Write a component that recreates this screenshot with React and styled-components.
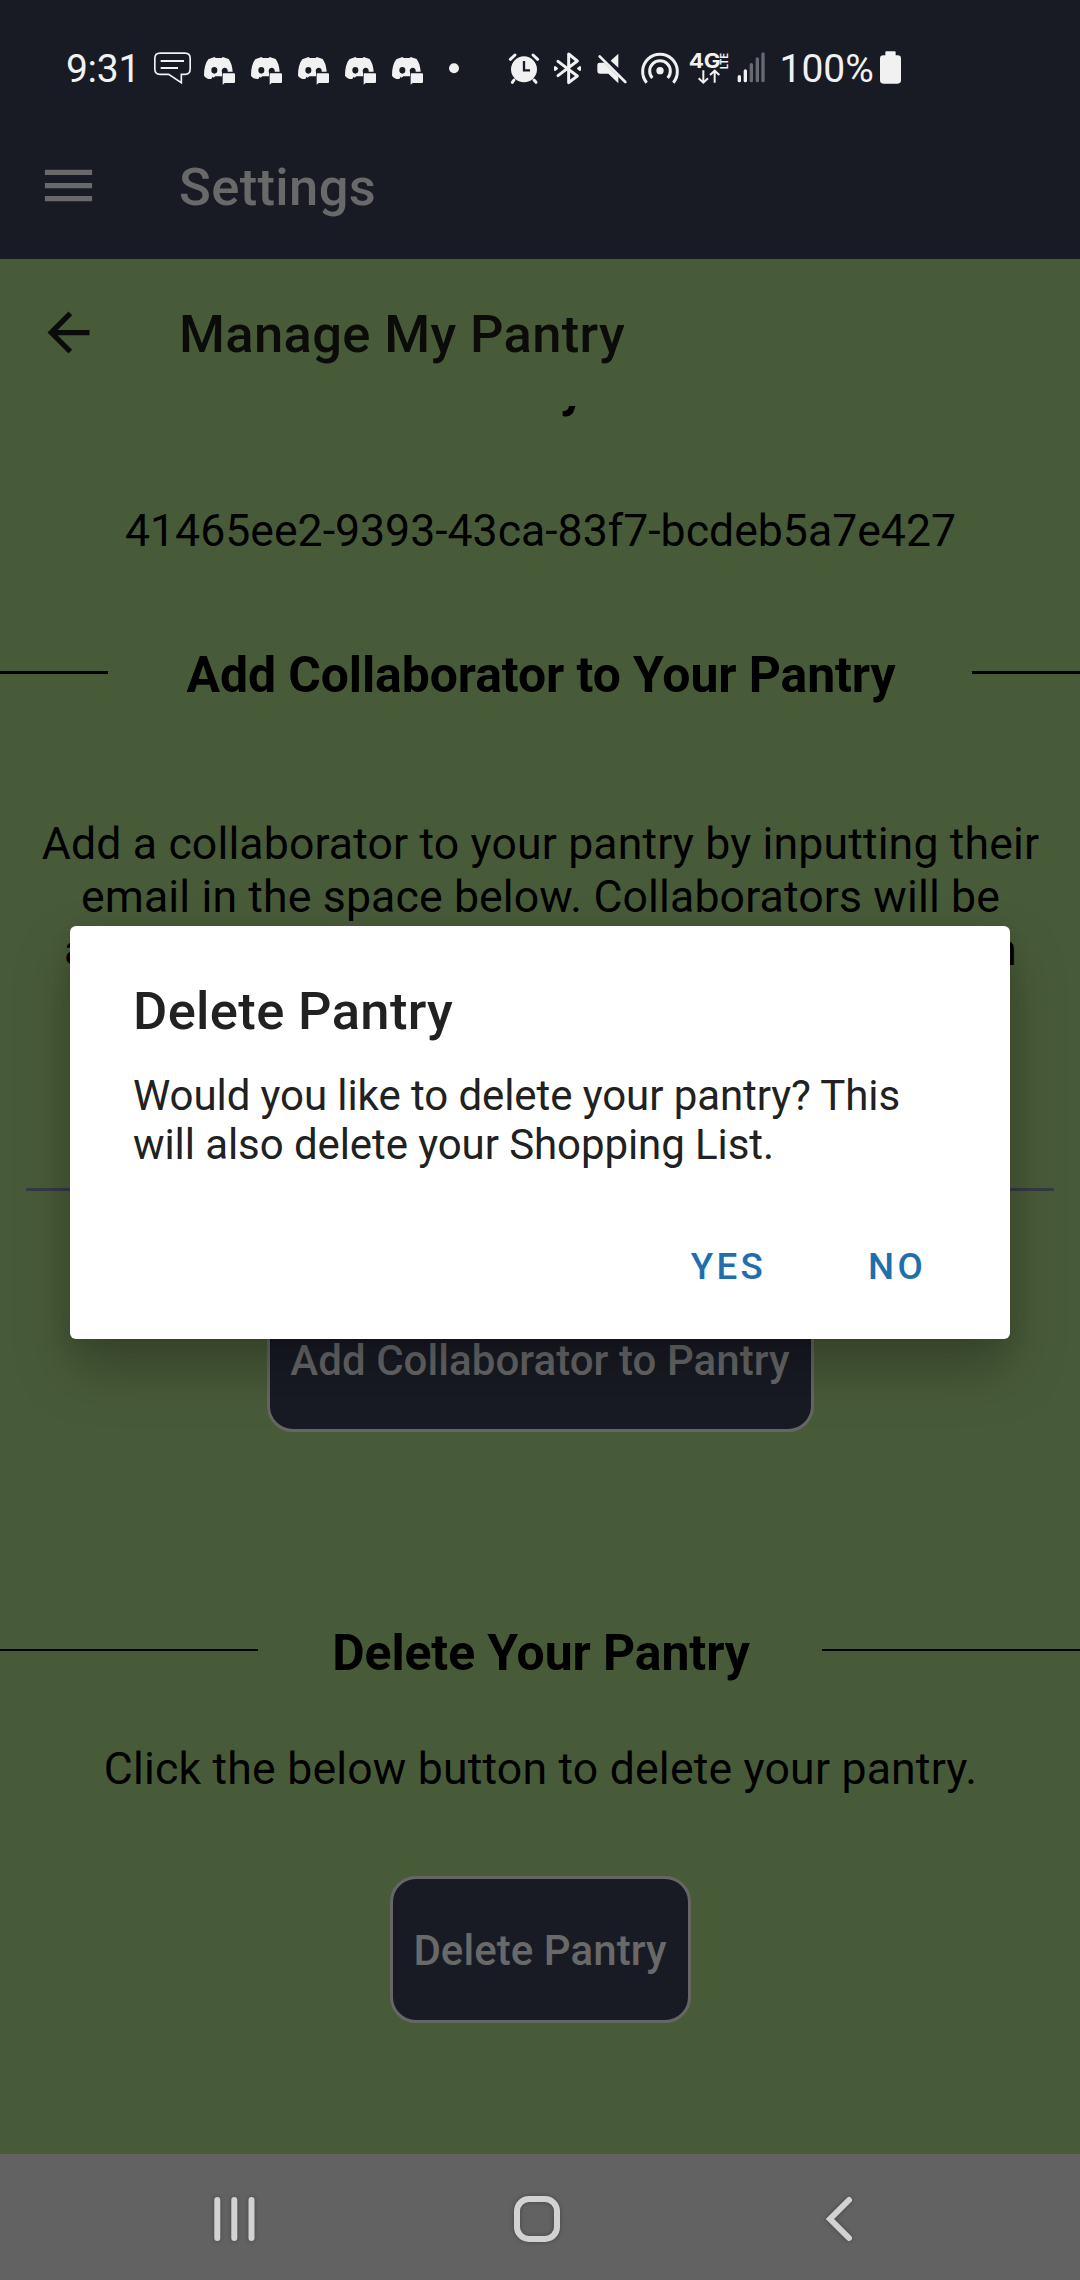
import React from "react";
import styled, { createGlobalStyle } from "styled-components";

const Global = createGlobalStyle`
  * { box-sizing: border-box; }
  body { margin: 0; background: #485b39; font-family: Roboto, sans-serif; }
`;

const Screen = styled.div`
  position: relative;
  width: 1080px;
  height: 2280px;
  display: flex;
  flex-direction: column;
  overflow: hidden;
  background: #485b39;
`;

const StatusBar = styled.div`
  height: 112px;
  flex: none;
  display: flex;
  align-items: center;
  padding: 24px 178px 0 66px;
  background: #191b24;
  color: #f1f1f1;
`;

const StatusText = styled.span`
  font-size: 39px;
  line-height: 46px;
  margin-top: 2px;
  width: ${(p) => p.$w}px;
  letter-spacing: ${(p) => p.$spacing}px;
  white-space: nowrap;
`;

const Glyph = styled.svg`
  display: block;
  flex: none;
  height: 36px;
  overflow: visible;
  margin-left: ${(p) => p.$gap || 0}px;
`;

const AppBar = styled.div`
  height: 147px;
  flex: none;
  display: flex;
  align-items: center;
  padding-left: 37px;
  gap: 79px;
  background: ${(p) => p.$bg};
  color: ${(p) => p.$fg};
`;

const BarIcon = styled.svg`
  width: 63px;
  height: 63px;
  display: block;
  fill: currentColor;
`;

const BarTitle = styled.h1`
  margin: 3px 0 0;
  font-size: 52.5px;
  line-height: 62px;
  font-weight: 500;
  letter-spacing: 0.36px;
`;

const Content = styled.main`
  flex: 1;
  min-height: 0;
  display: flex;
  flex-direction: column;
  align-items: center;
  overflow: hidden;
  color: #000;
`;

const Heading = styled.h2`
  margin: 0;
  padding-left: 2px;
  font-size: 49.9px;
  line-height: 60px;
  font-weight: 700;
  letter-spacing: -0.08px;
  text-align: center;
  white-space: nowrap;
`;

const ScrolledHeading = styled(Heading)`
  margin-top: -47px;
  flex: none;
`;

const SectionRow = styled.div`
  width: 100%;
  flex: none;
  display: flex;
  justify-content: space-between;
  margin-top: ${(p) => p.$top}px;
`;

const Rule = styled.div`
  width: ${(p) => p.$w}px;
  height: ${(p) => p.$h}px;
  margin-top: 26px;
  background: #000;
`;

const Paragraph = styled.p`
  margin: ${(p) => p.$top}px 0 0;
  padding-left: 1px;
  flex: none;
  font-size: 44.6px;
  line-height: 53px;
  letter-spacing: ${(p) => p.$spacing || 0}px;
  text-align: center;
  white-space: nowrap;
`;

const WideLine = styled.span`
  display: flex;
  justify-content: space-between;
  width: 953px;
  margin: 0 auto;
`;

const FieldLine = styled.div`
  flex: none;
  width: 1028px;
  height: 3px;
  margin-top: 211px;
  background: #363a42;
`;

const ActionButton = styled.button`
  flex: none;
  width: ${(p) => p.$w}px;
  height: 147px;
  margin-top: ${(p) => p.$top}px;
  padding: ${(p) => p.$drop || 2}px 0 0;
  border: 3px solid #666;
  border-radius: 26px;
  background: #191b24;
  color: #696969;
  font: 500 42px/50px Roboto, sans-serif;
  letter-spacing: 0.06px;
  white-space: nowrap;
`;

const NavBar = styled.nav`
  height: 126px;
  flex: none;
  display: flex;
  align-items: center;
  padding: 3px 222px 0 208px;
  background: #626262;
`;

const NavIcon = styled.svg`
  width: ${(p) => p.$w}px;
  height: 54px;
  margin-right: ${(p) => p.$after || 0}px;
  display: block;
  fill: none;
  stroke: #d2d2d2;
  stroke-width: 6;
  stroke-linecap: round;
  filter: drop-shadow(0 0 2px rgba(0, 0, 0, 0.3));
`;

const Overlay = styled.div`
  position: absolute;
  inset: 0;
  display: flex;
  align-items: flex-start;
  justify-content: center;
  padding-top: 926px;
`;

const Dialog = styled.section`
  width: 940px;
  height: 413px;
  display: flex;
  flex-direction: column;
  padding: 54px 63px 0;
  border-radius: 6px;
  background: #fff;
  color: #212121;
  box-shadow: 0 30px 56px rgba(0, 0, 0, 0.26), 0 4px 20px rgba(0, 0, 0, 0.08);
`;

const DialogTitle = styled.h2`
  margin: 0;
  font-size: 52.5px;
  line-height: 62px;
  font-weight: 500;
  letter-spacing: 0.36px;
`;

const DialogText = styled.p`
  margin: 29px 0 0;
  font-size: 42px;
  line-height: 49px;
  letter-spacing: -0.08px;
`;

const DialogActions = styled.div`
  display: flex;
  justify-content: flex-end;
  gap: 102px;
  margin-top: 76px;
  padding-right: 21px;
`;

const TextButton = styled.button`
  padding: 0;
  border: 0;
  background: none;
  color: #1f6fae;
  font: 500 36.75px/44px Roboto, sans-serif;
  letter-spacing: 3.28px;
`;

function MessageIcon() {
  return (
    <Glyph width="37" viewBox="312 60 111 108" fill="none" stroke="#f1f1f1" strokeWidth="5">
      <path d="M330 69.500H405Q420.500 69.500 420.500 85V117Q420.500 133 405 133H394V158L356 133H330Q314.500 133 314.500 117V85Q314.500 69.500 330 69.500Z" />
      <path d="M332 93H402M332 114H384" strokeWidth="6" />
    </Glyph>
  );
}

function DiscordIcon({ gap }) {
  return (
    <Glyph width="31" viewBox="462 60 93 108" $gap={gap} fill="#f1f1f1">
      <path
        fillRule="evenodd"
        d="M485 84 494 81 497 84H515L518 81 536 87C543 97 547 109 548 125H533A9 10 0 1 0 516 127V139H496L491 143 488 140 484 147C475 148 467 144 462 137C462 116 466 99 475 88ZM493 111A9 10 0 1 0 493 131 9 10 0 1 0 493 111Z"
      />
      <path d="M520 130H552Q555 130 555 133V156Q555 159 552 159H524L518 164V132Q518 130 520 130Z" />
    </Glyph>
  );
}

function AlarmIcon() {
  return (
    <Glyph width="30" viewBox="56 60 90 108" fill="#f1f1f1">
      <circle cx="101" cy="118" r="39" />
      <path d="M60 88 74 75M142 88 128 75M71 150 66 157M131 150 137 157" stroke="#f1f1f1" strokeWidth="9" strokeLinecap="round" />
      <path d="M101 93V121H119" fill="none" stroke="#191b24" strokeWidth="7" />
    </Glyph>
  );
}

function BluetoothIcon() {
  return (
    <Glyph width="29" viewBox="189 60 87 108" $gap={14} fill="none" stroke="#f1f1f1" strokeWidth="9" strokeLinejoin="round" strokeLinecap="round">
      <path d="M204 94 262 138 236 158V72L262 93 204 137" />
      <path d="M195 111V120L201 115.500ZM270 111V120L264 115.500Z" strokeWidth="6" />
    </Glyph>
  );
}

function MutedIcon() {
  return (
    <Glyph width="30" viewBox="320 60 90 108" $gap={14.5} fill="#f1f1f1">
      <path d="M328 98H342L384 140V160L354 131H328Q321 131 321 124V105Q321 98 328 98ZM384 71V113L361 92Z" />
      <path d="M328 79 405 156" stroke="#f1f1f1" strokeWidth="8" strokeLinecap="round" />
    </Glyph>
  );
}

function HotspotIcon() {
  return (
    <Glyph width="38" viewBox="452 60 114 108" $gap={14} fill="none" stroke="#f1f1f1" strokeWidth="9">
      <circle cx="509" cy="122" r="11" fill="#f1f1f1" stroke="none" />
      <path d="M469 158A52 52 0 1 1 549 158" />
      <path d="M486 144A31 31 0 1 1 532 144" />
    </Glyph>
  );
}

const NetworkLabel = styled.text`
  font-family: Inter, sans-serif;
  font-weight: 700;
  fill: #f1f1f1;
`;

function NetworkIcon() {
  return (
    <Glyph width="40" viewBox="597 60 120 108" $gap={10.500}>
      <NetworkLabel x="596" y="113" fontSize="62" textLength="96" lengthAdjust="spacingAndGlyphs">4G</NetworkLabel>
      <NetworkLabel fontSize="29" textLength="48" lengthAdjust="spacingAndGlyphs" transform="translate(715 117) rotate(-90)">LTE</NetworkLabel>
      <path d="M640 121V157M626 145 640 158 654 145M674 158V123M660 135 674 122 688 135" fill="none" stroke="#f1f1f1" strokeWidth="6" />
    </Glyph>
  );
}

function SignalIcon() {
  const bars = [[747, 140], [765, 123], [783, 104], [801, 87], [818, 72]];
  return (
    <Glyph width="29" viewBox="740 60 87 108" $gap={7.5} strokeWidth="10" strokeLinecap="round">
      {bars.map(([x, y], i) => (
        <path key={x} d={`M${x} ${y}V152`} stroke={i < 2 ? "#f1f1f1" : "#696a70"} />
      ))}
    </Glyph>
  );
}

function BatteryIcon() {
  return (
    <Glyph width="21" viewBox="1170 60 63 108" fill="#f1f1f1">
      <path d="M1189 64H1214Q1217 64 1217 67V76H1223Q1233 76 1233 86V151Q1233 161 1223 161H1180Q1170 161 1170 151V86Q1170 76 1180 76H1186V67Q1186 64 1189 64Z" />
    </Glyph>
  );
}

const LeftStatus = styled.div`
  display: flex;
  align-items: center;
  width: 443px;
`;

const RightStatus = styled.div`
  display: flex;
  align-items: center;
`;

export default function App() {
  return (
    <>
      <Global />
      <Screen>
        <StatusBar>
          <LeftStatus>
            <StatusText $w={88} $spacing={-0.3}>9:31</StatusText>
            <MessageIcon />
            <DiscordIcon gap={13} />
            <DiscordIcon gap={16} />
            <DiscordIcon gap={16} />
            <DiscordIcon gap={16} />
            <DiscordIcon gap={16} />
            <Glyph width="10" viewBox="1197 60 30 108" $gap={26} fill="#f1f1f1">
              <circle cx="1212" cy="115" r="15" />
            </Glyph>
          </LeftStatus>
          <RightStatus>
            <AlarmIcon />
            <BluetoothIcon />
            <MutedIcon />
            <HotspotIcon />
            <NetworkIcon />
            <SignalIcon />
            <Glyph as="span" $gap={14} />
            <StatusText $w={100.5} $spacing={0}>100%</StatusText>
            <BatteryIcon />
          </RightStatus>
        </StatusBar>
        <AppBar $bg="#191b24" $fg="#696969">
          <BarIcon viewBox="0 0 24 24">
            <path d="M3 18h18v-2H3v2zm0-5h18v-2H3v2zm0-7v2h18V6H3z" />
          </BarIcon>
          <BarTitle>Settings</BarTitle>
        </AppBar>
        <AppBar $bg="#485b39" $fg="#0b0c09">
          <BarIcon viewBox="0 0 24 24">
            <path d="M20 11H7.830l5.590-5.590L12 4l-8 8 8 8 1.410-1.410L7.830 13H20v-2z" />
          </BarIcon>
          <BarTitle>Manage My Pantry</BarTitle>
        </AppBar>
        <Content>
          <ScrolledHeading>Pantry ID</ScrolledHeading>
          <Paragraph $top={86}>41465ee2-9393-43ca-83f7-bcdeb5a7e427</Paragraph>
          <SectionRow $top={87}>
            <Rule $w={108} $h={3} />
            <Heading>Add Collaborator to Your Pantry</Heading>
            <Rule $w={108} $h={3} />
          </SectionRow>
          <Paragraph $top={113} $spacing={0.13}>
            Add a collaborator to your pantry by inputting their
            <br />
            email in the space below. Collaborators will be
            <WideLine>
              <span>a</span>
              <span>n</span>
            </WideLine>
          </Paragraph>
          <FieldLine />
          <ActionButton $w={547} $top={94} $drop={5}>Add Collaborator to Pantry</ActionButton>
          <SectionRow $top={191}>
            <Rule $w={258} $h={2} />
            <Heading>Delete Your Pantry</Heading>
            <Rule $w={258} $h={2} />
          </SectionRow>
          <Paragraph $top={60} $spacing={0.18}>Click the below button to delete your pantry.</Paragraph>
          <ActionButton $w={301} $top={80}>Delete Pantry</ActionButton>
        </Content>
        <NavBar>
          <NavIcon $w={52} $after={250} viewBox="208 2191.500 52 54">
            <path d="M217.300 2199.500V2237.500M234.300 2199.500V2237.500M251.500 2199.500V2237.500" />
          </NavIcon>
          <NavIcon $w={54} $after={256} viewBox="510 2191.500 54 54">
            <rect x="517" y="2198.500" width="40" height="40" rx="12" />
          </NavIcon>
          <NavIcon $w={38} viewBox="820 2191.500 38 54">
            <path d="M849 2199.500 830 2218.500 849 2237.500" />
          </NavIcon>
        </NavBar>
        <Overlay>
          <Dialog>
            <DialogTitle>Delete Pantry</DialogTitle>
            <DialogText>
              Would you like to delete your pantry? This
              <br />
              will also delete your Shopping List.
            </DialogText>
            <DialogActions>
              <TextButton>YES</TextButton>
              <TextButton>NO</TextButton>
            </DialogActions>
          </Dialog>
        </Overlay>
      </Screen>
    </>
  );
}
